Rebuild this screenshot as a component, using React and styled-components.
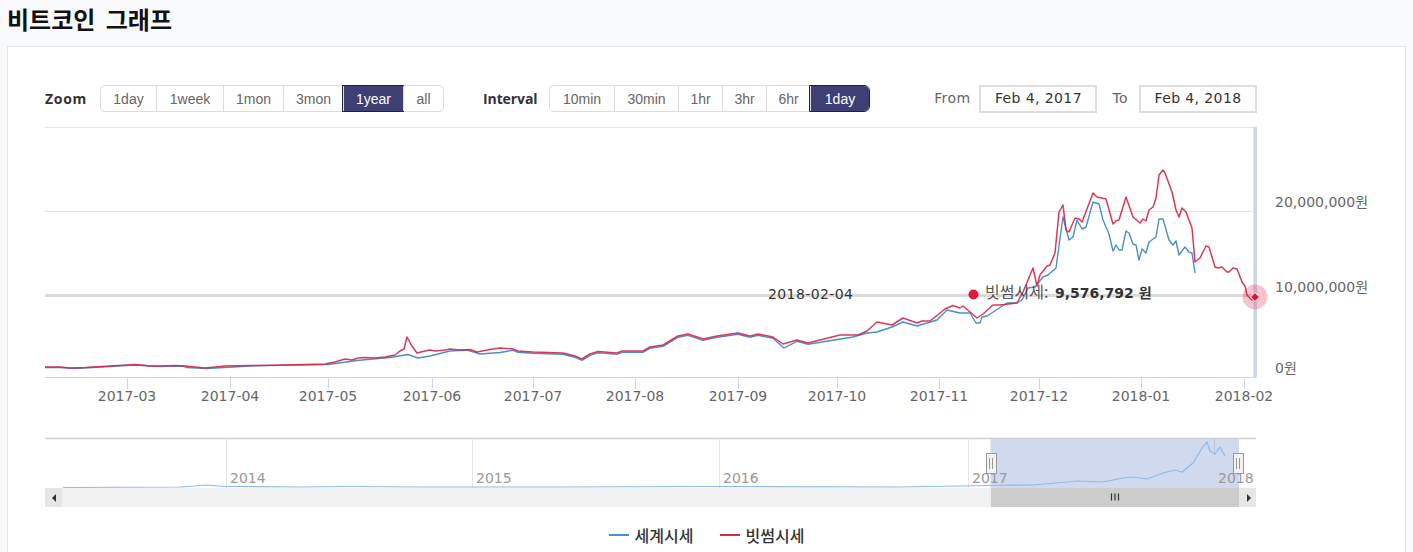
import React from 'react';
import styled, { createGlobalStyle } from 'styled-components';

const GlobalStyle = createGlobalStyle`
	html, body {
		margin: 0;
		padding: 0;
		height: 552px;
		overflow: hidden;
		background: #f8f9fb;
	}
`;

const zoomItems = [
	{ label: '1day', width: 55 },
	{ label: '1week', width: 67 },
	{ label: '1mon', width: 60 },
	{ label: '3mon', width: 60 },
	{ label: '1year', width: 60, active: true },
	{ label: 'all', width: 40 }
];
const intervalItems = [
	{ label: '10min', width: 64 },
	{ label: '30min', width: 64 },
	{ label: '1hr', width: 44 },
	{ label: '3hr', width: 44 },
	{ label: '6hr', width: 44 },
	{ label: '1day', width: 59, active: true }
];

// chart points are in page pixels, the svg viewBox starts at the chart corner
const red = [
	[45, 367], [60, 367], [70, 368], [85, 367.5], [110, 366], [135, 364.5], [150, 366], [160, 366], [175, 365.5], [185, 366],
	[205, 368], [225, 366], [250, 365.5], [285, 365], [325, 364], [335, 362], [345, 359], [352, 360], [358, 358], [365, 357.5],
	[375, 358], [385, 357], [395, 355], [400, 351], [404, 349], [407, 337], [412, 346], [417, 353], [425, 351], [430, 350],
	[435, 351], [445, 350], [450, 349], [460, 350], [470, 349.5], [477, 352], [490, 349.5], [500, 348], [513, 349], [518, 351],
	[533, 352], [563, 353], [575, 356], [582, 359], [590, 354], [598, 351.5], [617, 353], [622, 351], [643, 351], [650, 347],
	[663, 345], [678, 336], [688, 334], [703, 339], [717, 336], [738, 333], [750, 336], [758, 334], [773, 337], [783, 344],
	[797, 340], [808, 343], [840, 335], [858, 335], [867, 331], [877, 322], [892, 325], [903, 318], [917, 323], [922, 321],
	[930, 321], [945, 309], [953, 305.5], [960, 308], [963, 306], [977, 318], [983, 314], [993, 305], [1000, 305], [1017, 303],
	[1023, 292], [1033, 268], [1037, 286], [1040, 275], [1047, 266], [1050, 265], [1055, 253], [1059, 212], [1063, 205], [1066, 230],
	[1069, 232], [1075, 218], [1079, 219], [1082, 222], [1093, 193], [1097, 197], [1106, 199], [1113, 224], [1116, 221], [1119, 220],
	[1126, 197], [1133, 217], [1140, 223], [1143, 219], [1146, 221], [1149, 210], [1153, 207], [1156, 198], [1159, 175], [1163, 170],
	[1165, 173], [1172, 192], [1176, 210], [1179, 217], [1182, 208], [1186, 212], [1192, 228], [1195, 262], [1200, 258], [1206, 246],
	[1209, 247], [1215, 267], [1218, 268], [1222, 267], [1227, 272], [1229, 272], [1233, 268], [1237, 269], [1242, 282], [1245, 286],
	[1247, 295], [1252, 300], [1255, 298]
];
// the two series nearly touch from June to September, so blue follows red there
const blueMiddle = red
	.filter((p) => p[0] > 510 && p[0] < 835)
	.map((p) => (p[0] === 783 ? [784, 348] : [p[0], p[1] + 1.3]));
const blue = [
	[45, 367.5], [60, 367.5], [75, 368.5], [110, 366.5], [135, 365], [160, 366.5], [183, 366], [187, 367.5], [207, 368.5], [250, 366],
	[328, 364.5], [357, 360.5], [390, 357.5], [408, 354.5], [418, 358], [430, 356], [450, 351], [467, 350], [480, 354], [500, 352.5],
	...blueMiddle,
	[853, 337], [867, 333], [877, 332], [892, 327], [903, 322], [917, 326], [937, 320],
	[947, 310], [960, 313], [970, 313], [976, 323], [980, 323], [982, 317], [987, 316], [1007, 303], [1017, 303], [1022, 300],
	[1028, 288], [1035, 287], [1043, 277], [1048, 275], [1056, 268], [1058, 253], [1063, 217], [1069, 240], [1073, 237], [1077, 220],
	[1082, 229], [1086, 227], [1093, 202], [1099, 204], [1103, 220], [1109, 234], [1113, 251], [1116, 245], [1119, 250], [1122, 250],
	[1126, 231], [1129, 233], [1133, 244], [1136, 245], [1139, 260], [1142, 249], [1146, 253], [1149, 242], [1156, 237], [1159, 219],
	[1163, 219], [1169, 240], [1173, 245], [1176, 241], [1179, 255], [1185, 247], [1189, 252], [1192, 253], [1195, 273]
];
const overview = [
	[63, 487.5], [180, 487], [195, 486], [205, 485], [225, 486.5], [300, 487], [350, 486.5], [420, 487], [560, 487], [700, 486.5],
	[900, 487], [991, 485.5], [1033, 485], [1050, 483.5], [1067, 482], [1077, 481], [1100, 482], [1108, 481], [1123, 478], [1133, 477],
	[1147, 479], [1163, 473], [1175, 470], [1182, 472], [1193, 463], [1202, 448], [1207, 442], [1210, 451], [1215, 454], [1220, 447],
	[1225, 456]
];

const ticks = [
	{ x: 127, label: '2017-03' },
	{ x: 230, label: '2017-04' },
	{ x: 328, label: '2017-05' },
	{ x: 432, label: '2017-06' },
	{ x: 533, label: '2017-07' },
	{ x: 635, label: '2017-08' },
	{ x: 738, label: '2017-09' },
	{ x: 837, label: '2017-10' },
	{ x: 939, label: '2017-11' },
	{ x: 1039, label: '2017-12' },
	{ x: 1141, label: '2018-01' },
	{ x: 1244, label: '2018-02' }
];
const yLabels = [
	{ y: 207, label: '20,000,000원' },
	{ y: 292, label: '10,000,000원' },
	{ y: 373, label: '0원' }
];
const years = [
	{ x: 226, label: '2014' },
	{ x: 472, label: '2015' },
	{ x: 719, label: '2016' },
	{ x: 968, label: '2017' },
	{ x: 1214, label: '2018' }
];

const toPoints = (list) => list.map((p) => p.join(',')).join(' ');

const Segmented = ({ items }) => (
	<ButtonGroup>
		{items.map((item) => (
			<RangeButton key={item.label} $active={item.active} $width={item.width}>
				{item.label}
			</RangeButton>
		))}
	</ButtonGroup>
);

const PriceChart = () => (
	<ChartSvg viewBox="45 120 1355 388">
		<line x1="45" x2="1256" y1="127.5" y2="127.5" stroke="#e6e6e6" />
		<line x1="45" x2="1256" y1="211.5" y2="211.5" stroke="#e6e6e6" />
		<line x1="45" x2="1256" y1="295.5" y2="295.5" stroke="#dadada" strokeWidth="3" />
		<line x1="45" x2="1256" y1="377.5" y2="377.5" stroke="#ccd6eb" />
		<line x1="1253.5" x2="1253.5" y1="127" y2="377" stroke="#e6e6e6" />
		<line x1="1255.5" x2="1255.5" y1="127" y2="377" stroke="#ccd6eb" strokeWidth="3" />

		{ticks.map((t) => (
			<g key={t.label}>
				<line x1={t.x + 0.5} x2={t.x + 0.5} y1="377" y2="389" stroke="#ccd6eb" />
				<AxisText x={t.x} y="401" textAnchor="middle">
					{t.label}
				</AxisText>
			</g>
		))}
		{yLabels.map((l) => (
			<AxisText key={l.label} x="1275" y={l.y}>
				{l.label}
			</AxisText>
		))}

		<polyline points={toPoints(blue)} fill="none" stroke="#4a8fcb" strokeWidth="1.4" strokeLinejoin="round" />
		<polyline points={toPoints(red)} fill="none" stroke="#d42a4b" strokeOpacity="0.92" strokeWidth="1.5" strokeLinejoin="round" />

		<TooltipDate x="768" y="299">2018-02-04</TooltipDate>
		<circle cx="973.5" cy="294.5" r="5" fill="#e5173f" />
		<TooltipName x="985" y="298">빗썸시세:</TooltipName>
		<TooltipValue x="1055" y="298">9,576,792 원</TooltipValue>

		<circle cx="1255" cy="297" r="12.5" fill="#e5173f" fillOpacity="0.25" />
		<polygon points="1255,292.5 1259.5,297 1255,301.5 1250.5,297" fill="#d9163c" stroke="#fff" strokeWidth="1" />

		<line x1="45" x2="1256" y1="438.5" y2="438.5" stroke="#cfcfcf" strokeWidth="1.4" />
		{years.slice(0, 4).map((y) => (
			<line key={y.x} x1={y.x + 0.5} x2={y.x + 0.5} y1="439" y2="488" stroke="#e6e6e6" />
		))}
		<rect x="990.5" y="439" width="248.5" height="49" fill="#d0d9ed" />
		<line x1="1214.5" x2="1214.5" y1="439" y2="455" stroke="#bcc4d6" />
		{years.map((y) => (
			<YearText key={y.label} x={y.x + 4} y="483">
				{y.label}
			</YearText>
		))}
		<polyline points={toPoints(overview)} fill="none" stroke="#8fbbe6" strokeWidth="1.2" />

		<rect x="45" y="488" width="1211" height="19" fill="#f2f2f2" />
		<rect x="45" y="488" width="17" height="19" fill="#e6e6e6" />
		<polygon points="56,494 56,502 52,498" fill="#333" />
		<rect x="991" y="488" width="248" height="19" fill="#cccccc" />
		<path d="M1111.5 493.5v7M1115 493.5v7M1118.5 493.5v7" stroke="#333" strokeWidth="1.2" fill="none" />
		<rect x="1239" y="488" width="17" height="19" fill="#e6e6e6" />
		<polygon points="1247,494 1247,502 1251,498" fill="#333" />

		{[991, 1238].map((x) => (
			<g key={x}>
				<rect x={x - 4.5} y="453.5" width="10" height="20" fill="#f2f2f2" stroke="#999" />
				<path d={`M${x - 1.5} 458v11M${x + 1.5} 458v11`} stroke="#999" fill="none" />
			</g>
		))}
	</ChartSvg>
);

export default function App() {
	return (
		<Page>
			<GlobalStyle />
			<Title>비트코인 그래프</Title>
			<Card>
				<Toolbar>
					<GroupLabel $width={55} $track={0.7}>Zoom</GroupLabel>
					<Segmented items={zoomItems} />
					<GroupLabel $width={66} $gap={39} $track={-0.1}>Interval</GroupLabel>
					<Segmented items={intervalItems} />
					<DateRange>
						<DateLabel $after={9}>From</DateLabel>
						<DateBox>Feb 4, 2017</DateBox>
						<DateLabel $before={15} $after={11}>To</DateLabel>
						<DateBox>Feb 4, 2018</DateBox>
					</DateRange>
				</Toolbar>
				<PriceChart />
				<Legend>
					<LegendItem $color="#4a8fcb">세계시세</LegendItem>
					<LegendItem $color="#d42a4b">빗썸시세</LegendItem>
				</Legend>
			</Card>
		</Page>
	);
}

const Page = styled.div`
	width: 1413px;
	height: 552px;
	overflow: hidden;
	padding: 0 7px;
	box-sizing: border-box;
`;

const Title = styled.h1`
	margin: 0;
	height: 46px;
	box-sizing: border-box;
	padding-top: 1px;
	font-family: 'Noto Sans CJK KR', sans-serif;
	font-size: 24px;
	line-height: 36px;
	font-weight: 700;
	word-spacing: 5px;
	color: #111;
`;

const Card = styled.div`
	background: #fff;
	border: 1px solid #e6e6e6;
	height: 520px;
	box-sizing: border-box;
	padding: 38px 0 0 37px;
`;

const Toolbar = styled.div`
	display: flex;
	align-items: center;
	width: 1212px;
	height: 27px;
	margin-bottom: 8px;
`;

const GroupLabel = styled.span`
	flex: none;
	width: ${(p) => p.$width}px;
	margin-left: ${(p) => p.$gap || 0}px;
	font-family: 'Open Sans', sans-serif;
	font-size: 14px;
	font-weight: 700;
	letter-spacing: ${(p) => p.$track}px;
	color: #333;
`;

const ButtonGroup = styled.div`
	display: flex;
	height: 27px;
	box-sizing: border-box;
	border: 1px solid #ddd;
	border-radius: 5px;
`;

const RangeButton = styled.button`
	width: ${(p) => p.$width}px;
	box-sizing: border-box;
	font-family: 'Liberation Sans', sans-serif;
	font-size: 14px;
	padding: 0;
	margin: 0;
	border: 0;
	border-left: 1px solid #ddd;
	background: ${(p) => (p.$active ? '#3f3f75' : '#fff')};
	color: ${(p) => (p.$active ? '#fff' : '#666')};
	outline: ${(p) => (p.$active ? '1px solid #22223c' : 'none')};
	border-radius: 0;

	&:first-child {
		border-left: 0;
		border-radius: 5px 0 0 5px;
	}
	&:last-child {
		border-radius: 0 5px 5px 0;
	}
`;

const DateRange = styled.div`
	display: flex;
	align-items: center;
	margin-left: auto;
`;

const DateLabel = styled.span`
	font-family: 'DejaVu Sans', sans-serif;
	font-size: 14px;
	letter-spacing: 0.4px;
	color: #666;
	margin: 0 ${(p) => p.$after}px 2px ${(p) => p.$before || 0}px;
`;

const DateBox = styled.div`
	width: 118px;
	height: 28px;
	box-sizing: border-box;
	border: 2px solid #dedede;
	text-align: center;
	font-family: 'DejaVu Sans', sans-serif;
	font-size: 14px;
	letter-spacing: 0.4px;
	line-height: 23px;
	color: #333;
`;

const ChartSvg = styled.svg`
	display: block;
	width: 1355px;
	height: 388px;
`;

const AxisText = styled.text`
	font-family: 'DejaVu Sans', 'Noto Sans CJK KR', sans-serif;
	font-size: 14px;
	fill: #666;
`;

const TooltipDate = styled.text`
	font-family: 'DejaVu Sans', sans-serif;
	font-size: 14px;
	letter-spacing: 0.4px;
	fill: #333;
`;

const TooltipName = styled.text`
	font-family: 'Noto Sans CJK KR', sans-serif;
	font-size: 16px;
	fill: #333;
	fill-opacity: 0.85;
`;

const TooltipValue = styled.text`
	font-family: 'DejaVu Sans', 'Noto Sans CJK KR', sans-serif;
	font-size: 14px;
	font-weight: 700;
	fill: #333;
`;

const YearText = styled.text`
	font-family: 'DejaVu Sans', sans-serif;
	font-size: 14px;
	fill: #999;
`;

const Legend = styled.div`
	display: flex;
	justify-content: center;
	gap: 26px;
	width: 1397px;
	margin-top: 17px;
	margin-left: -37px;
`;

const LegendItem = styled.span`
	display: flex;
	align-items: center;
	font-family: 'Noto Sans CJK KR', sans-serif;
	font-size: 16px;
	font-weight: 500;
	line-height: 20px;
	color: #333;

	&::before {
		content: '';
		width: 20px;
		height: 2px;
		margin-right: 6px;
		background: ${(p) => p.$color};
	}
`;
